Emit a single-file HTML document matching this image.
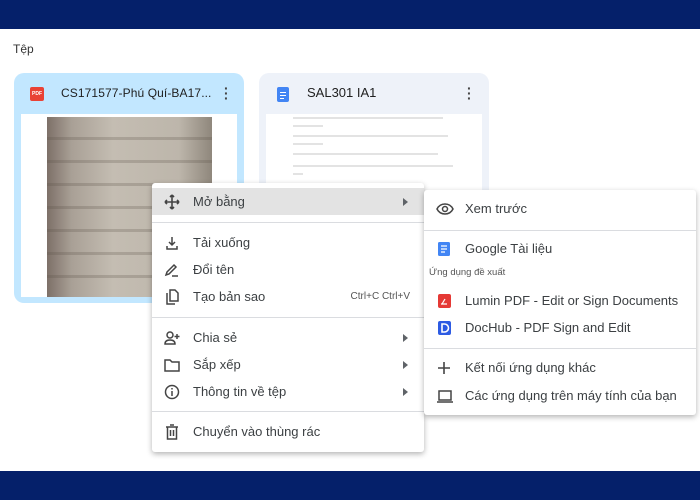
<!DOCTYPE html>
<html><head><meta charset="utf-8"><style>
*{margin:0;padding:0;box-sizing:border-box}
body{width:700px;height:500px;position:relative;overflow:hidden;background:#fff;font-family:"Liberation Sans",sans-serif;color:#3c4043}
.bar{position:absolute;left:0;width:700px;background:#05206a}
.abs{position:absolute}
.card{position:absolute;top:73px;width:230px;height:230px;border-radius:10px}
.menu{position:absolute;background:#fff;box-shadow:0 2px 6px rgba(0,0,0,.3);border-radius:3px}
.it{position:absolute;left:0;right:0;height:27px;font-size:13px;line-height:27px}
.it span.t{position:absolute;left:41px}
.it svg{position:absolute;left:12px;top:6px}
.arr{position:absolute;right:16px;top:10px;width:0;height:0;border-left:5px solid #5f6368;border-top:4px solid transparent;border-bottom:4px solid transparent}
.div{position:absolute;left:0;right:0;height:1px;background:#dadce0}
.line{position:absolute;height:2px;background:#c8c8c8}
</style></head><body>
<div class="bar" style="top:0;height:29px"></div>
<div class="bar" style="top:471px;height:29px"></div>
<div class="abs" style="left:13px;top:42px;font-size:12px;color:#333">Tệp</div>

<div class="card" style="left:14px;background:#c2e7ff">
  <div class="abs" style="left:16px;top:14px;width:14px;height:14px;background:#e94235;border-radius:2px;color:#fff;font-size:5px;font-weight:bold;line-height:14px;text-align:center">PDF</div>
  <div class="abs" style="left:47px;top:13px;font-size:12px;letter-spacing:0.1px;color:#1f1f1f">CS171577-Phú Quí-BA17...</div>
  <div class="abs" style="left:210px;top:13px;font-size:14px;font-weight:bold;line-height:5px;color:#444">·<br>·<br>·</div>
  <div class="abs" style="left:7px;top:41px;width:216px;height:183px;background:#fff"></div>
  <div class="abs" style="left:33px;top:44px;width:165px;height:180px;background:repeating-linear-gradient(180deg,transparent 0 20px,rgba(90,80,70,.25) 20px 23px),linear-gradient(90deg,#7d7068 0%,#a9a096 15%,#c4bdb2 40%,#bdb6ab 80%,#8f877c 100%)"></div>
</div>
<div class="card" style="left:259px;background:#eef2f9">
  <div class="abs" style="left:18px;top:14px;width:12px;height:15px;background:#4285f4;border-radius:2px"></div>
  <div class="abs" style="left:21px;top:19px;width:6px;height:1.3px;background:#fff"></div>
  <div class="abs" style="left:21px;top:22px;width:6px;height:1.3px;background:#fff"></div>
  <div class="abs" style="left:21px;top:25px;width:4px;height:1.3px;background:#fff"></div>
  <div class="abs" style="left:48px;top:12px;font-size:13px;color:#1f1f1f">SAL301 IA1</div>
  <div class="abs" style="left:208px;top:13px;font-size:14px;font-weight:bold;line-height:5px;color:#444">·<br>·<br>·</div>
  <div class="abs" style="left:7px;top:41px;width:216px;height:150px;background:#fff"></div>
  <div class="line" style="left:34px;top:44px;width:150px;opacity:.5"></div>
  <div class="line" style="left:34px;top:52px;width:30px;opacity:.5"></div>
  <div class="line" style="left:34px;top:62px;width:155px;opacity:.5"></div>
  <div class="line" style="left:34px;top:70px;width:30px;opacity:.5"></div>
  <div class="line" style="left:34px;top:80px;width:145px;opacity:.5"></div>
  <div class="line" style="left:34px;top:92px;width:160px;opacity:.5"></div>
  <div class="line" style="left:34px;top:100px;width:10px;opacity:.5"></div>
</div>

<div class="menu" style="left:152px;top:183px;width:272px;height:269px">
  <div class="it" style="top:5px;background:#e3e3e3"><svg width="16" height="16" viewBox="0 0 16 16"><path d="M8 1v14M1 8h14M8 1l-2 2M8 1l2 2M8 15l-2-2M8 15l2-2M1 8l2-2M1 8l2 2M15 8l-2-2M15 8l-2 2" stroke="#444" stroke-width="1.6" fill="none"/></svg><span class="t">Mở bằng</span><span class="arr"></span></div>
  <div class="div" style="top:39px"></div>
  <div class="it" style="top:46px"><svg width="16" height="16" viewBox="0 0 16 16"><path d="M8 2v8M5 7l3 3 3-3M3 11v3h10v-3" stroke="#444" stroke-width="1.5" fill="none"/></svg><span class="t">Tải xuống</span></div>
  <div class="it" style="top:73px"><svg width="16" height="16" viewBox="0 0 16 16"><path d="M2 13l1-3 7-7 2 2-7 7zM8 14h6" stroke="#444" stroke-width="1.5" fill="none"/></svg><span class="t">Đổi tên</span></div>
  <div class="it" style="top:100px"><svg width="16" height="16" viewBox="0 0 16 16"><path d="M3 4v11h8M6 1h5l3 3v8H6z" stroke="#444" stroke-width="1.5" fill="none"/></svg><span class="t">Tạo bản sao</span><span style="position:absolute;right:14px;font-size:10px;color:#555">Ctrl+C Ctrl+V</span></div>
  <div class="div" style="top:134px"></div>
  <div class="it" style="top:141px"><svg width="16" height="16" viewBox="0 0 16 16"><circle cx="6" cy="5" r="3" stroke="#444" stroke-width="1.5" fill="none"/><path d="M1 14c0-3 2-4 5-4s5 1 5 4zM13 4v5M10.5 6.5h5" stroke="#444" stroke-width="1.5" fill="none"/></svg><span class="t">Chia sẻ</span><span class="arr"></span></div>
  <div class="it" style="top:168px"><svg width="16" height="16" viewBox="0 0 16 16"><path d="M1 3h5l2 2h7v9H1z" stroke="#444" stroke-width="1.5" fill="none"/></svg><span class="t">Sắp xếp</span><span class="arr"></span></div>
  <div class="it" style="top:195px"><svg width="16" height="16" viewBox="0 0 16 16"><circle cx="8" cy="8" r="6.5" stroke="#444" stroke-width="1.5" fill="none"/><path d="M8 7v5M8 4v1.5" stroke="#444" stroke-width="1.5"/></svg><span class="t">Thông tin về tệp</span><span class="arr"></span></div>
  <div class="div" style="top:228px"></div>
  <div class="it" style="top:235px"><svg width="16" height="16" viewBox="0 0 16 16"><path d="M2 3h12M6 1h4M3.5 3v12h9V3M6.5 6v6M9.5 6v6" stroke="#444" stroke-width="1.5" fill="none"/></svg><span class="t">Chuyển vào thùng rác</span></div>
</div>

<div class="menu" style="left:424px;top:190px;width:272px;height:225px">
  <div class="it" style="top:5px"><svg width="18" height="16" viewBox="0 0 18 16"><path d="M1 8c2-4 5-5 8-5s6 1 8 5c-2 4-5 5-8 5s-6-1-8-5z" stroke="#444" stroke-width="1.5" fill="none"/><circle cx="9" cy="8" r="2.5" stroke="#444" stroke-width="1.5" fill="none"/></svg><span class="t">Xem trước</span></div>
  <div class="div" style="top:40px"></div>
  <div class="it" style="top:45px"><svg width="16" height="16" viewBox="0 0 16 16"><rect x="2" y="1" width="12" height="14" rx="1.5" fill="#4285f4"/><path d="M5 5h6M5 8h6M5 11h4" stroke="#fff" stroke-width="1.3"/></svg><span class="t">Google Tài liệu</span></div>
  <div class="abs" style="left:5px;top:77px;font-size:9.5px;color:#555">Ứng dụng đề xuất</div>
  <div class="it" style="top:97px"><svg width="16" height="16" viewBox="0 0 16 16"><rect x="2" y="1" width="13" height="14" rx="2" fill="#e53935"/><path d="M6 11l3-5M5 11h6" stroke="#fff" stroke-width="1.2"/></svg><span class="t">Lumin PDF - Edit or Sign Documents</span></div>
  <div class="it" style="top:124px"><svg width="16" height="16" viewBox="0 0 16 16"><rect x="2" y="1" width="13" height="14" rx="2" fill="#2d5be3"/><path d="M6 4h2.5a4 4 0 010 8H6z" stroke="#fff" stroke-width="1.6" fill="none"/></svg><span class="t">DocHub - PDF Sign and Edit</span></div>
  <div class="div" style="top:158px"></div>
  <div class="it" style="top:164px"><svg width="16" height="16" viewBox="0 0 16 16"><path d="M8 2v12M2 8h12" stroke="#444" stroke-width="1.6"/></svg><span class="t">Kết nối ứng dụng khác</span></div>
  <div class="it" style="top:192px"><svg width="18" height="16" viewBox="0 0 18 16"><path d="M3 3h12v9H3zM1 14h16" stroke="#444" stroke-width="1.5" fill="none"/></svg><span class="t">Các ứng dụng trên máy tính của bạn</span></div>
</div>
</body></html>
